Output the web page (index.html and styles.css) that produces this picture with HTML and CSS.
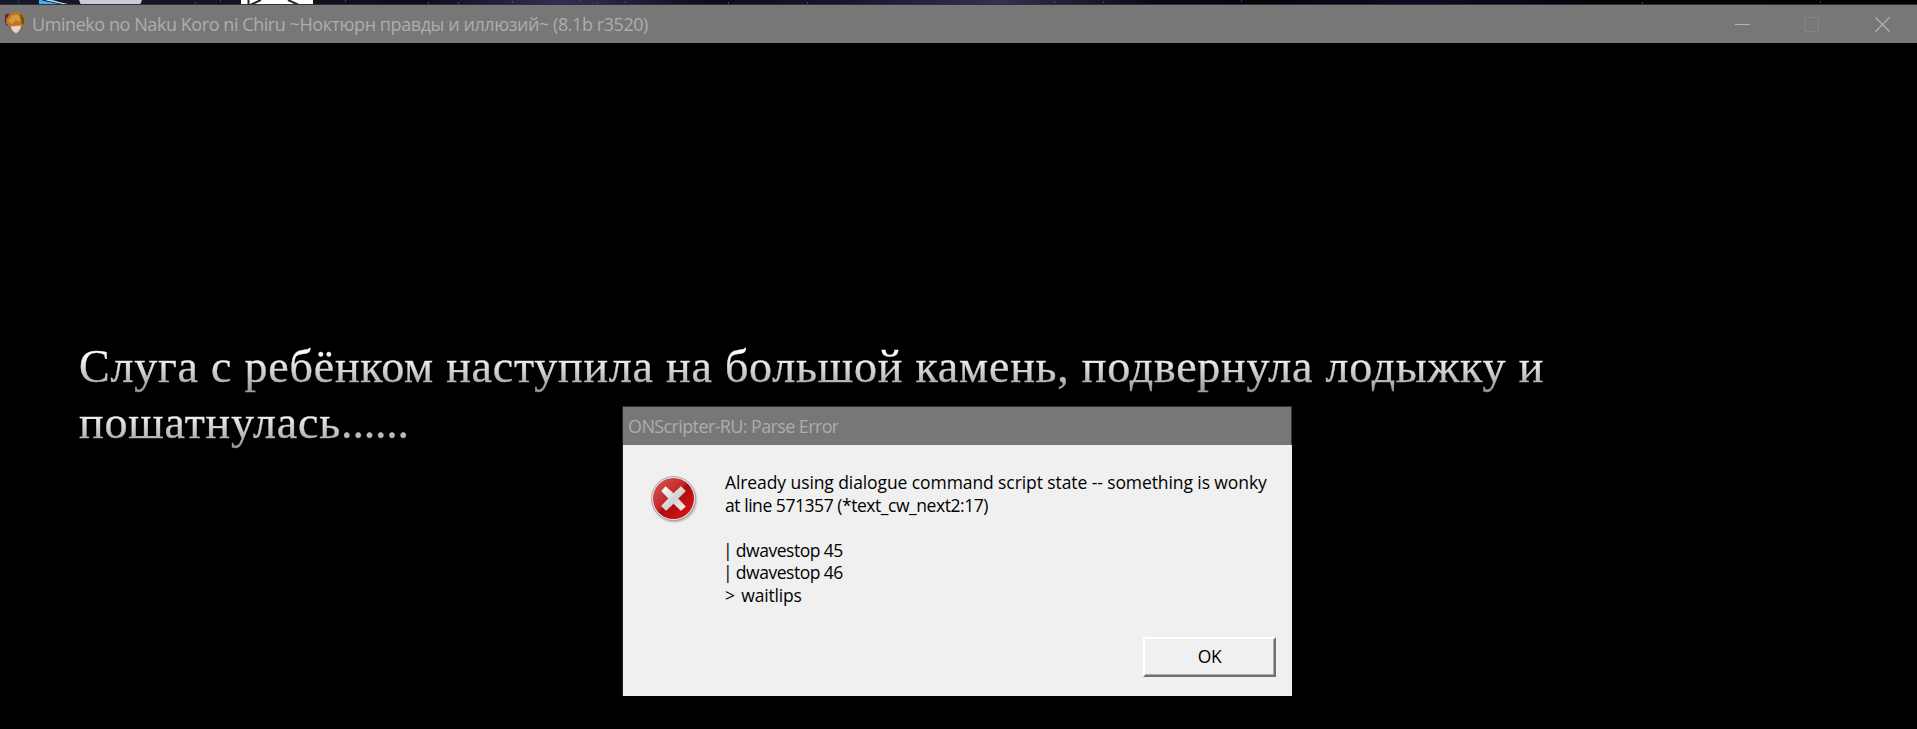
FILE: index.html
```
<!DOCTYPE html>
<html lang="ru">
<head>
<meta charset="utf-8">
<title>Umineko no Naku Koro ni Chiru</title>
<link rel="stylesheet" href="styles.css">
</head>
<body>
<div class="desktop">
  <svg class="desktop-icons" width="1917" height="5" viewBox="0 0 1917 5">
    <path d="M39 0H53L68 5H39Z" fill="#42aef0"/>
    <path d="M42 0L66 5" stroke="#17202c"/>
    <path d="M47 0L70 5" stroke="#dfe5ea"/>
    <path d="M79 0H142L140 5H81Z" fill="#cacad6"/>
    <path d="M241 0H313V5H241Z" fill="#fff"/>
    <path d="M248.500 0V5M250 5L261 0M288 0L299 5" stroke="#182b39" stroke-width="2" fill="none"/>
    <path d="M18 2h1M195 3h1M220 1h1M345 1h1M428 3h1M458 3h1M512 2h1M579 1h1M597 3h1M625 2h1M728 3h1M807 3h1M1054 2h1M1103 2h1M1241 1h1M1642 3h1M1820 2h1" stroke="#77778f"/>
  </svg>
</div>
<header class="titlebar">
  <svg class="app-icon" width="22" height="24" viewBox="0 0 22 26" preserveAspectRatio="none">
    <path d="M1 6Q0 1 6 2L9 10L3 15Q0 12 1 6Z" fill="#5b263d"/>
    <path d="M6 12L18 12Q18 20 12 23Q6 19 6 12Z" fill="#c99a82"/>
    <path d="M7 16L17 15Q16 21 12 23Q8 21 7 16Z" fill="#f0d2c6"/>
    <path d="M2 12Q2 1 12 0Q21 1 21 9Q20 15 18 16L16 14L11 15L6 15L4 14Z" fill="#b87920"/>
    <path d="M4 10Q7 2 13 3Q17 5 17 11L12 9L8 13Z" fill="#d8993a"/>
    <path d="M16 2Q22 5 20 14L17 12Z" fill="#79500f"/>
    <path d="M5 15L6 20M18 15L17 20" stroke="#795e50"/>
  </svg>
  <h1 class="window-title">Umineko no Naku Koro ni Chiru ~Ноктюрн правды и иллюзий~ (8.1b r3520)</h1>
  <div class="controls">
    <svg width="15" height="15" viewBox="0 0 15 15"><path d="M0 7.500H15" stroke="#b5b5b5"/></svg>
    <svg width="15" height="15" viewBox="0 0 15 15"><path d="M.5.5H14.500V14.500H.5Z" fill="none" stroke="#858585"/></svg>
    <svg width="15" height="15" viewBox="0 0 15 15"><path d="M.3.3L14.700 14.700M14.700.3L.3 14.700" stroke="#b8b8b8" stroke-width="1.200"/></svg>
  </div>
</header>
<main class="game">
  <p class="story"><span class="line line-one">Слуга с ребёнком наступила на большой камень, подвернула лодыжку и</span><span class="line line-two">пошатнулась<span class="dots">......</span></span></p>
  <section class="dialog">
    <h2 class="dialog-title">ONScripter-RU: Parse Error</h2>
    <div class="dialog-body">
      <svg class="error-icon" width="48" height="50" viewBox="0 0 48 50">
        <defs>
          <linearGradient id="red" x1="0" y1="0" x2="1" y2="1"><stop offset="0" stop-color="#d65a5a"/><stop offset=".45" stop-color="#c52528"/><stop offset=".5" stop-color="#a90b0e"/><stop offset="1" stop-color="#ed1414"/></linearGradient>
          <linearGradient id="cross" x1="0" y1="0" x2="1" y2="1"><stop offset="0" stop-color="#fff"/><stop offset=".55" stop-color="#d2d2d2"/><stop offset="1" stop-color="#f4f4f4"/></linearGradient>
          <filter id="shade" x="-20%" y="-20%" width="140%" height="140%"><feGaussianBlur stdDeviation="1.200"/></filter>
        </defs>
        <circle cx="24.500" cy="25" r="22" fill="#777" opacity=".6" filter="url(#shade)"/>
        <circle cx="23.500" cy="23.500" r="22" fill="#e4e4e4" stroke="#999" stroke-width=".8"/>
        <circle cx="23.500" cy="23.500" r="20.500" fill="url(#red)"/>
        <path d="M15.500 11.500L23.500 18.500L31 11.500L35.500 16L28 23.500L35.500 31.500L31 35.500L23.500 28.500L16 35.500L11.500 31L18.500 23.500L11.500 16Z" fill="url(#cross)" stroke="#eee" stroke-width=".5" stroke-linejoin="round"/>
      </svg>
      <div class="message">
        <p class="msg m1">Already using dialogue command script state -- something is wonky</p>
        <p class="msg m2">at line 571357 (*text_cw_next2:17)</p>
        <p class="msg gap"></p>
        <p class="msg m3">| dwavestop 45</p>
        <p class="msg m3">| dwavestop 46</p>
        <p class="msg m4">&gt; waitlips</p>
      </div>
    </div>
    <button class="ok">OK</button>
  </section>
</main>
</body>
</html>
```
FILE: styles.css
```
* { box-sizing: border-box; }
body { margin: 0; width: 1917px; height: 729px; background: #000; overflow: hidden; font-family: "Open Sans", sans-serif; }
h1, h2, p { margin: 0; font-weight: 400; white-space: pre; }
svg { display: block; flex: none; }
.desktop { height: 5px; border-bottom: 1px solid #333338; overflow: hidden; background: linear-gradient(90deg, #17182a 0, #11121f 320px, #0b0c1c 420px, #303057 560px, #0c0c1b 710px, #15172f 850px, #34304e 1000px, #090a17 1150px, #04040b 1260px, #0a0d24 1420px, #030308 1600px, #020206 100%); }
.titlebar { height: 38px; background: #777; display: flex; align-items: center; padding-left: 4px; }
.app-icon { margin-top: -1px; }
.window-title { margin-left: 6px; font-size: 18px; line-height: 38px; color: #adadad; letter-spacing: -0.435px; }
.controls { margin-left: auto; margin-right: 27px; display: flex; gap: 55px; }
.controls svg:nth-child(2) { margin: 0 1px 0 -1px; }
.game { height: 686px; padding: 0 0 0 79px; display: flex; flex-direction: column; }
.story { padding-top: 296px; height: 363px; flex: none; font: 46px/56px "Liberation Serif", serif; }
.line { display: block; width: max-content; color: transparent; -webkit-text-stroke: 0.4px transparent; background: linear-gradient(#fff 14px, #eee 22px, #b5b5b5 42px, #999 52px); background-clip: text; -webkit-background-clip: text; }
.line-one { letter-spacing: 0.78px; }
.line-two { letter-spacing: 0.85px; }
.dots { letter-spacing: -0.2px; }
.dialog { margin-left: 543px; width: 670px; height: 290px; flex: none; background: #f0f0f0; border-left: 1px solid #222; display: flex; flex-direction: column; }
.dialog-title { height: 39px; flex: none; background: #777; border: 1px solid #333; border-bottom: 0; border-left: 0; padding: 1px 0 0 5px; font-size: 18px; line-height: 37px; color: #adadad; letter-spacing: -0.62px; }
.dialog-body { display: flex; align-items: flex-start; padding: 26px 0 0 27px; height: 192px; }
.error-icon { margin-top: 4px; }
.message { margin-left: 27px; }
.msg { height: 22.6px; font-size: 17.500px; line-height: 22.6px; color: #000; letter-spacing: -0.3px; }
.m1 { letter-spacing: -0.09px; }
.m2 { letter-spacing: -0.45px; }
.m3 { margin-left: -2px; letter-spacing: -0.45px; word-spacing: -0.5px; }
.m4 { word-spacing: 2.2px; letter-spacing: -0.2px; }
.ok { align-self: flex-end; margin-right: 16px; width: 133px; height: 40px; padding: 0 0 2px; background: #f0f0f0; border: 2px solid; border-color: #fff #707070 #707070 #fff; box-shadow: inset -1px -1px #aaa; font: 17.500px/34px "Open Sans", sans-serif; color: #000; letter-spacing: -0.5px; }
```
